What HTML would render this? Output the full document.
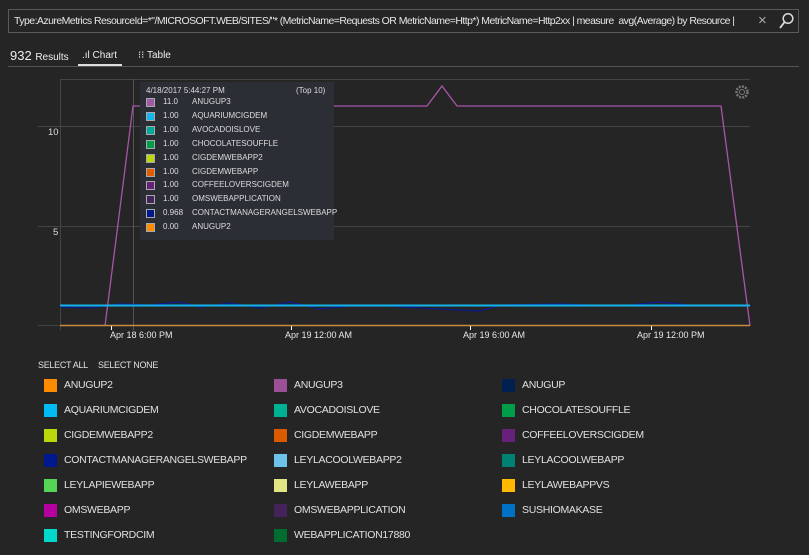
<!DOCTYPE html>
<html><head><meta charset="utf-8"><style>
body{margin:0;width:809px;height:555px;background:#252526;font-family:"Liberation Sans",sans-serif;color:#ddd;overflow:hidden;position:relative}
.abs{position:absolute}
.q{left:8px;top:9px;width:791px;height:24px;border:1px solid #5a5a5a;box-sizing:border-box;background:#252526}
.qt{left:14px;top:10px;width:734px;font-size:10.5px;line-height:22px;color:#e6e6e6;white-space:nowrap;overflow:hidden;letter-spacing:-0.55px}
.lg{font-size:10.5px;color:#e0e0e0;letter-spacing:-0.3px}
.sw{width:13px;height:13px}
.tt{font-size:8px;color:#ddd}
</style></head><body>
<div class="abs q"></div>
<div class="abs qt">Type:AzureMetrics ResourceId=*"/MICROSOFT.WEB/SITES/"* (MetricName=Requests OR MetricName=Http*) MetricName=Http2xx | measure &nbsp;avg(Average) by Resource |</div>
<div class="abs" style="left:758px;top:12px;font-size:15px;color:#aaa">×</div>
<svg class="abs" style="left:778px;top:12px" width="16" height="18"><circle cx="10" cy="6.5" r="4.8" stroke="#ddd" stroke-width="1.5" fill="none"/><line x1="6.6" y1="10" x2="2" y2="16" stroke="#ddd" stroke-width="1.8"/></svg>
<div class="abs" style="left:10px;top:48px;font-size:13px;color:#eee">932 <span style="font-size:10px">Results</span></div>
<div class="abs" style="left:82px;top:50px;font-size:10px;color:#eee">.ıl Chart</div>
<div class="abs" style="left:78px;top:64px;width:44px;height:2px;background:#ddd"></div>
<div class="abs" style="left:138px;top:50px;font-size:10px;color:#eee">⁝⁝ Table</div>
<div class="abs" style="left:8px;top:66px;width:791px;height:1px;background:#555"></div>
<svg class="abs" style="left:0;top:0" width="809" height="345">
<g stroke="#444" stroke-width="1">
<line x1="60" y1="79.5" x2="750" y2="79.5"/><line x1="38" y1="126.5" x2="750" y2="126.5"/><line x1="38" y1="226.5" x2="750" y2="226.5"/><line x1="38" y1="325.5" x2="750" y2="325.5"/>
<line x1="60.5" y1="79" x2="60.5" y2="330"/><line x1="133.5" y1="79" x2="133.5" y2="330" stroke="#555"/>
</g>
<text x="48" y="135" fill="#ddd" font-size="9.5" font-family="Liberation Sans">10</text>
<text x="53" y="235" fill="#ddd" font-size="9.5" font-family="Liberation Sans">5</text>
<polyline fill="none" stroke="#a855a8" stroke-width="1.3" points="105,326 133,106 427,106 442,86 457,106 721,106 750,326"/>
<polyline fill="none" stroke="#0a1a8a" stroke-width="1.2" points="60,307 90,308 120,304 150,305 180,302 200,307 230,303 260,308 290,302 320,309 350,306 390,306 420,308 480,311 500,305 560,304 620,306 660,302 690,305 720,306 750,306"/>
<line x1="60" y1="305.5" x2="750" y2="305.5" stroke="#13b5ea" stroke-width="2"/>
<line x1="60" y1="325.5" x2="750" y2="325.5" stroke="#c88a3c" stroke-width="1.5"/>
<g stroke="#fff" stroke-width="1"><line x1="111.5" y1="326" x2="111.5" y2="330"/><line x1="291.5" y1="326" x2="291.5" y2="330"/><line x1="470.5" y1="326" x2="470.5" y2="330"/><line x1="651.5" y1="326" x2="651.5" y2="330"/></g>
<g fill="#e8e8e8" font-size="9" font-family="Liberation Sans">
<text x="110" y="338">Apr 18 6:00 PM</text><text x="285" y="338">Apr 19 12:00 AM</text><text x="463" y="338">Apr 19 6:00 AM</text><text x="637" y="338">Apr 19 12:00 PM</text></g>
<g transform="translate(742,92)" fill="none" stroke="#777" stroke-width="2.5" stroke-dasharray="2 1.2"><circle r="5.5"/></g>
<circle cx="742" cy="92" r="2.5" fill="none" stroke="#777" stroke-width="1"/>
</svg>
<div class="abs" style="left:140px;top:82px;width:194px;height:158px;background:#2b2e35"></div>
<div class="abs tt" style="left:146px;top:86px">4/18/2017 5:44:27 PM</div>
<div class="abs tt" style="left:296px;top:86px">(Top 10)</div>
<div id="tt"></div>
<div class="abs lg" style="left:38px;top:360px;font-size:9px">SELECT ALL</div>
<div class="abs lg" style="left:98px;top:360px;font-size:9px">SELECT NONE</div>
<div id="lg"></div>
<script>
var t=[["#a05aa5","11.0","ANUGUP3"],["#13b5ea","1.00","AQUARIUMCIGDEM"],["#00a99a","1.00","AVOCADOISLOVE"],["#009e49","1.00","CHOCOLATESOUFFLE"],["#bad80a","1.00","CIGDEMWEBAPP2"],["#e25d00","1.00","CIGDEMWEBAPP"],["#68217a","1.00","COFFEELOVERSCIGDEM"],["#442359","1.00","OMSWEBAPPLICATION"],["#00188f","0.968","CONTACTMANAGERANGELSWEBAPP"],["#ff8c00","0.00","ANUGUP2"]];
var h="";t.forEach(function(r,i){var y=98+i*13.9;h+='<div class="abs" style="left:146px;top:'+y+'px;width:7px;height:7px;background:'+r[0]+';border:1px solid #aaa"></div><div class="abs tt" style="left:163px;top:'+(y-1)+'px">'+r[1]+'</div><div class="abs tt" style="left:192px;top:'+(y-1)+'px">'+r[2]+'</div>';});
document.getElementById("tt").innerHTML=h;
var l=[["#ff8c00","ANUGUP2"],["#9b4f96","ANUGUP3"],["#002050","ANUGUP"],["#00bcf2","AQUARIUMCIGDEM"],["#00b294","AVOCADOISLOVE"],["#009e49","CHOCOLATESOUFFLE"],["#bad80a","CIGDEMWEBAPP2"],["#da5a00","CIGDEMWEBAPP"],["#68217a","COFFEELOVERSCIGDEM"],["#00188f","CONTACTMANAGERANGELSWEBAPP"],["#6dc2e9","LEYLACOOLWEBAPP2"],["#008272","LEYLACOOLWEBAPP"],["#55d455","LEYLAPIEWEBAPP"],["#e2e584","LEYLAWEBAPP"],["#ffb900","LEYLAWEBAPPVS"],["#b4009e","OMSWEBAPP"],["#442359","OMSWEBAPPLICATION"],["#0072c6","SUSHIOMAKASE"],["#00d8cc","TESTINGFORDCIM"],["#006c30","WEBAPPLICATION17880"]];
h="";var xs=[44,274,502];l.forEach(function(r,i){var c=i%3,ro=Math.floor(i/3),y=379+ro*25;h+='<div class="abs sw" style="left:'+xs[c]+'px;top:'+y+'px;background:'+r[0]+'"></div><div class="abs lg" style="left:'+(xs[c]+20)+'px;top:'+y+'px">'+r[1]+'</div>';});
document.getElementById("lg").innerHTML=h;
</script>
</body></html>
